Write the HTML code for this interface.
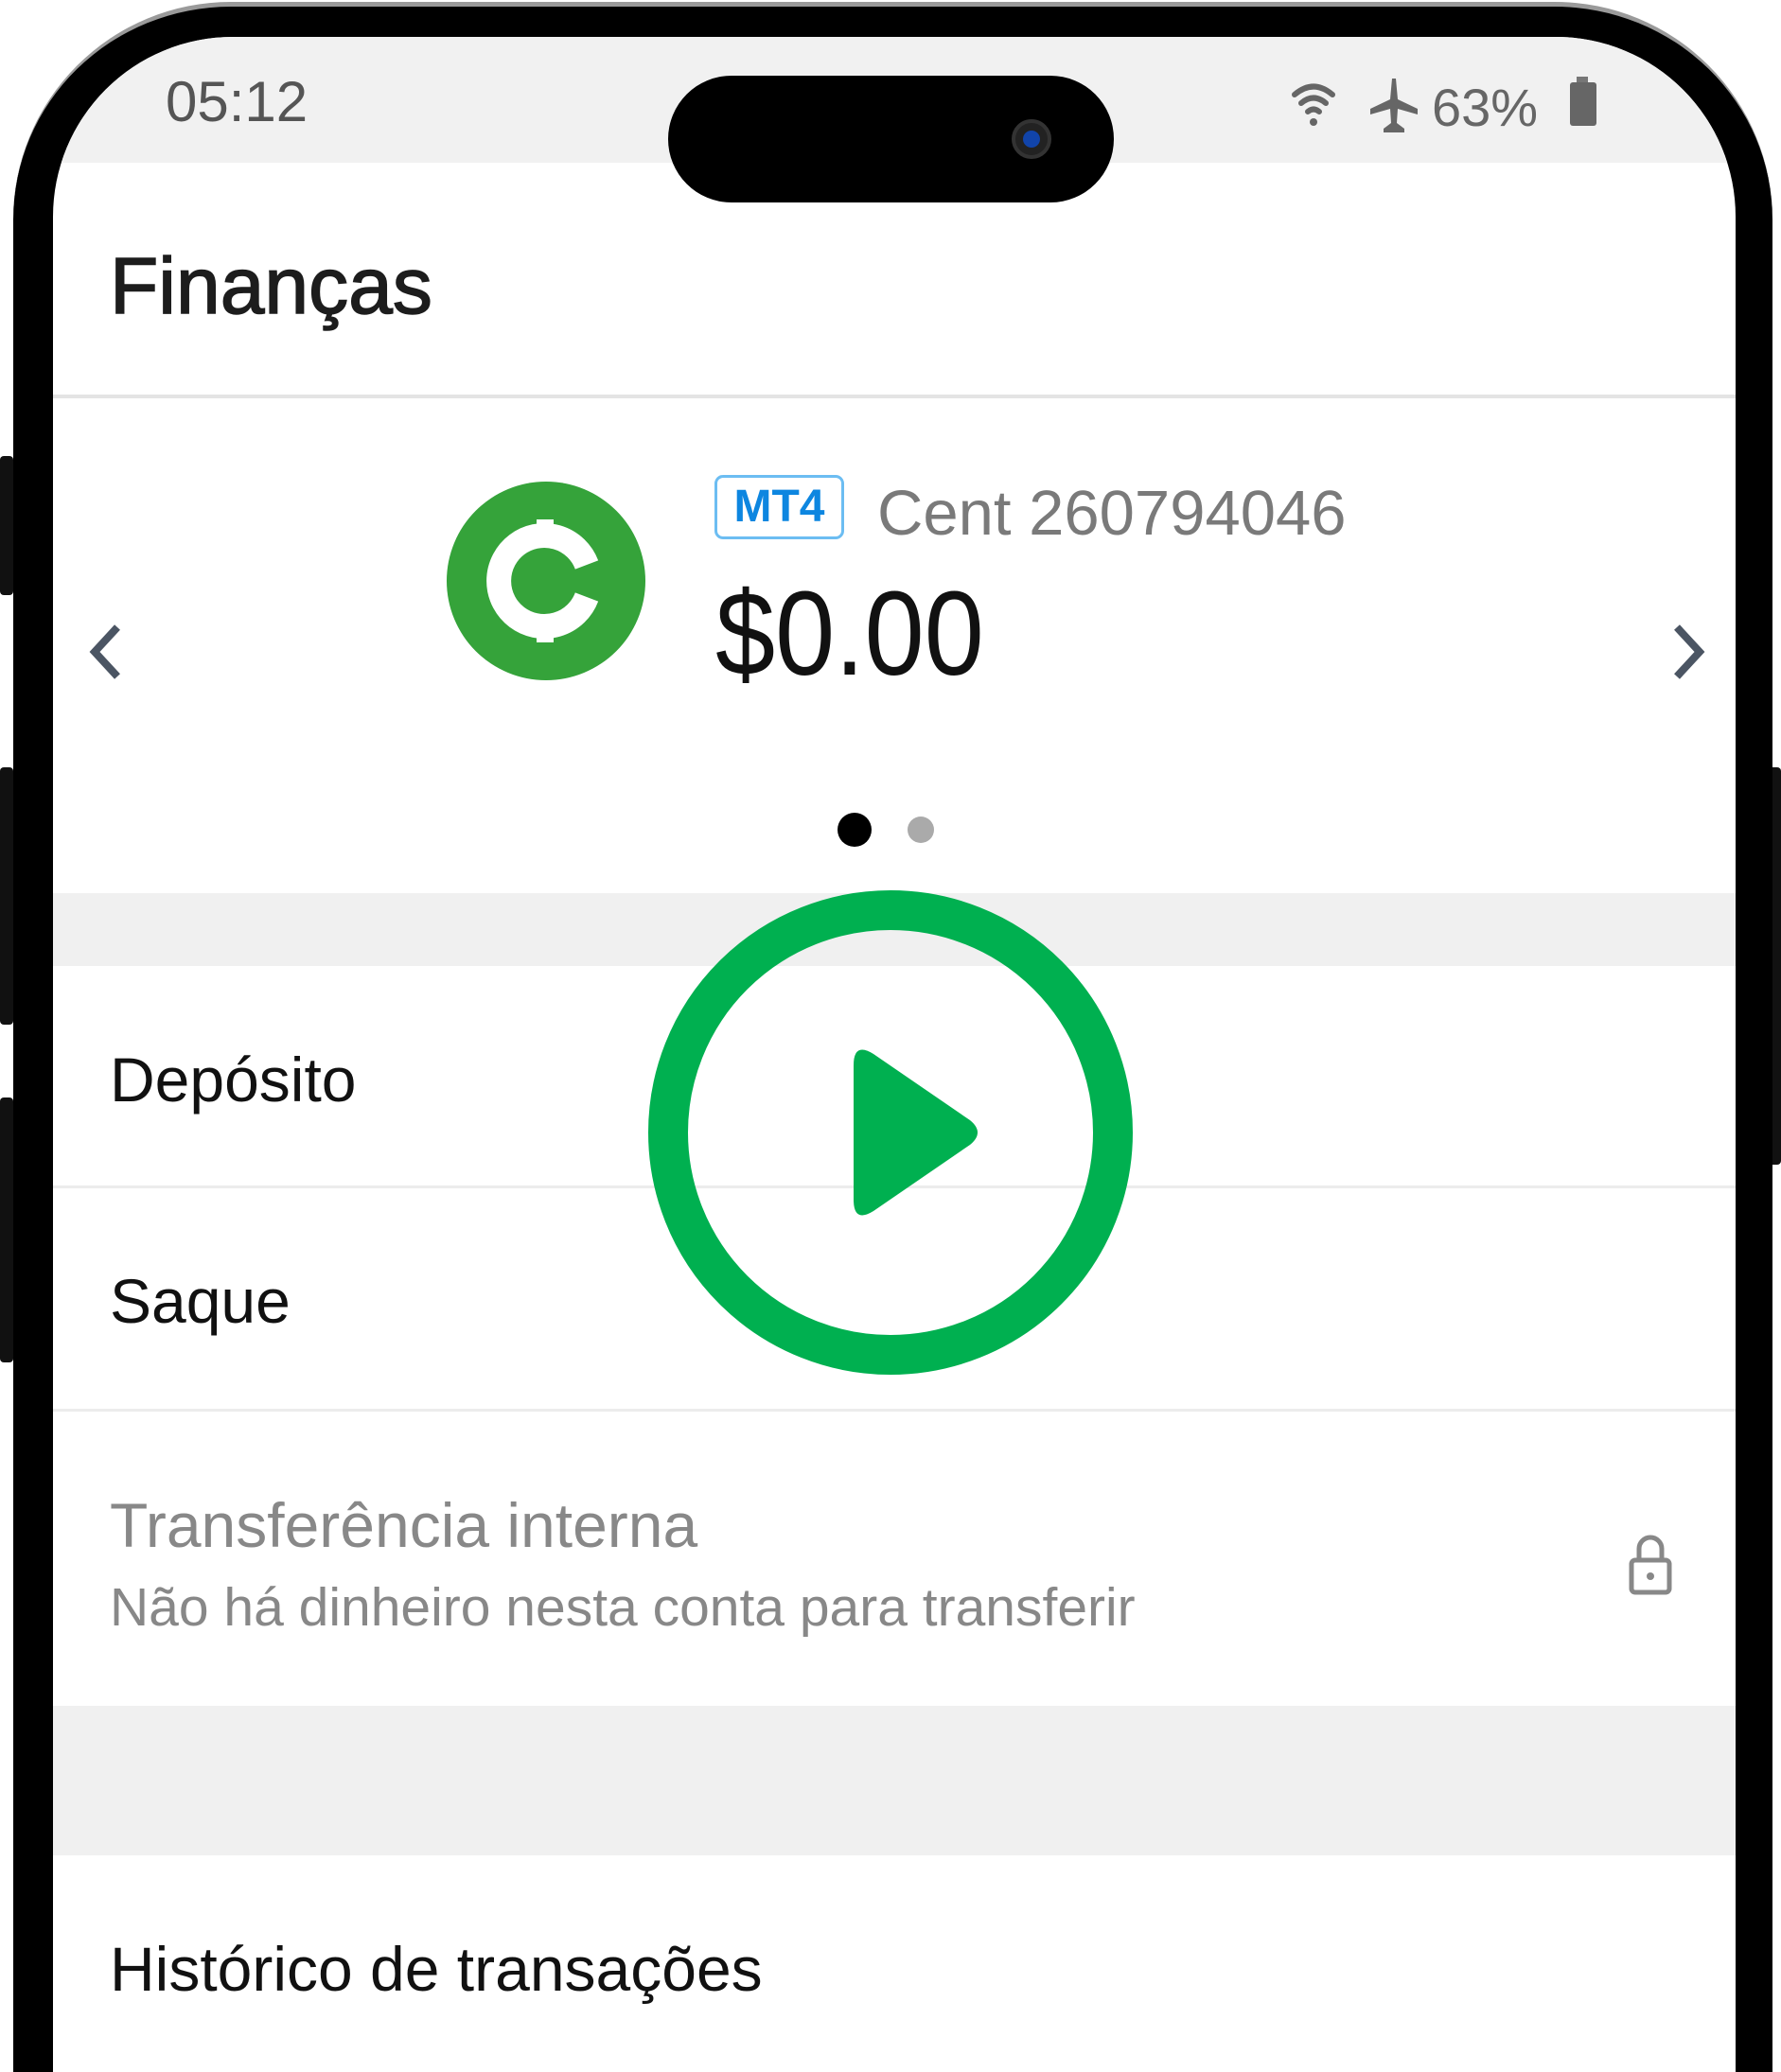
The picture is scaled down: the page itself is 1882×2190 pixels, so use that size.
<!DOCTYPE html>
<html style="width:1882px;height:2190px;overflow:hidden"><head><meta charset="utf-8"><style>
*{margin:0;padding:0;box-sizing:border-box}
body{width:1882px;height:2190px;background:#fff;position:relative;overflow:hidden;font-family:"Liberation Sans",sans-serif}
.clip{position:absolute;left:0;top:0;width:1882px;height:2190px;overflow:hidden}
.abs{position:absolute}
.frame{left:14px;top:2px;width:1859px;height:2188px;background:#000;border-radius:230px 230px 0 0;border-top:5px solid #9a9a9a}
.screen{left:56px;top:39px;width:1778px;height:2151px;background:#fff;border-radius:190px 190px 0 0;overflow:hidden}
.t{position:absolute;white-space:nowrap}
.sep{position:absolute;left:0;width:100%;height:3px;background:#ececec}
</style></head><body><div class="clip">
<div class="abs" style="left:0;top:482px;width:14px;height:147px;background:#111;border-radius:4px"></div>
<div class="abs" style="left:0;top:811px;width:14px;height:272px;background:#111;border-radius:4px"></div>
<div class="abs" style="left:0;top:1160px;width:14px;height:280px;background:#111;border-radius:4px"></div>
<div class="abs" style="left:1868px;top:811px;width:14px;height:420px;background:#111;border-radius:4px"></div>
<div class="abs frame"></div>
<div class="abs screen">
  <div class="abs" style="left:0;top:0;width:100%;height:133px;background:#f1f1f1"></div>
  <div class="t" style="left:119px;top:34px;font-size:60px;color:#555">05:12</div>
  <svg class="abs" style="left:1300px;top:36px" width="400" height="70" viewBox="0 0 400 70">
    <g fill="none" stroke="#666" stroke-width="6" stroke-linecap="round">
      <path d="M12 25 Q32 8 52 25"/><path d="M19 34 Q32 23 45 34"/><path d="M26 43 Q32 38 38 43"/>
    </g>
    <circle cx="32" cy="54" r="4" fill="#666"/>
    <path d="M115 8 L119 8 L121 30 L142 40 L142 46 L121 40 L120 55 L128 61 L128 65 L106 65 L106 61 L114 55 L113 40 L92 46 L92 40 L113 30 Z" fill="#666"/>
    <text x="157" y="58" font-family="Liberation Sans" font-size="56" fill="#666">63%</text>
    <rect x="310" y="6" width="12" height="8" fill="#777"/>
    <rect x="303" y="12" width="28" height="46" rx="3" fill="#666"/>
  </svg>
  <div class="abs" style="left:650px;top:41px;width:471px;height:134px;background:#000;border-radius:67px"></div>
  <div class="abs" style="left:1013px;top:87px;width:42px;height:42px;border-radius:50%;background:#222;border:4px solid #333"></div>
  <div class="abs" style="left:1025px;top:99px;width:18px;height:18px;border-radius:50%;background:#1144aa"></div>
  <div class="t" style="left:60px;top:215px;font-size:84px;color:#1d1d1d;-webkit-text-stroke:1.5px #1d1d1d">Finanças</div>
  <div class="sep" style="top:378px;height:4px;background:#e4e4e4"></div>
  <svg class="abs" style="left:416px;top:470px" width="210" height="210" viewBox="0 0 210 210">
    <circle cx="105" cy="105" r="105" fill="#35a33a"/>
    <path d="M148 88 A48 48 0 1 0 148 122" fill="none" stroke="#fff" stroke-width="26"/>
    <rect x="95" y="40" width="18" height="24" fill="#fff"/><rect x="95" y="146" width="18" height="24" fill="#fff"/>
  </svg>
  <div class="abs" style="left:699px;top:463px;width:137px;height:68px;border:3px solid #6cbdf2;border-radius:9px;color:#0d86e0;font-weight:bold;font-size:48px;text-align:center;line-height:62px">MT4</div>
  <div class="t" style="left:871px;top:465px;font-size:67px;color:#7a7a7a">Cent 260794046</div>
  <div class="t" style="left:700px;top:558px;font-size:126px;color:#111;transform:scaleX(0.9);transform-origin:0 0">$0.00</div>
  <svg class="abs" style="left:30px;top:610px" width="60" height="80"><path d="M38 14 L14 40 L38 66" fill="none" stroke="#4b5563" stroke-width="8"/></svg>
  <svg class="abs" style="left:1700px;top:610px" width="60" height="80"><path d="M16 14 L40 40 L16 66" fill="none" stroke="#4b5563" stroke-width="8"/></svg>
  <div class="abs" style="left:829px;top:820px;width:36px;height:36px;border-radius:50%;background:#000"></div>
  <div class="abs" style="left:903px;top:824px;width:28px;height:28px;border-radius:50%;background:#aaa"></div>
  <div class="abs" style="left:0;top:905px;width:100%;height:77px;background:#f0f0f0"></div>
  <div class="t" style="left:60px;top:1064px;font-size:66px;color:#111">Depósito</div>
  <div class="sep" style="top:1214px"></div>
  <div class="t" style="left:60px;top:1298px;font-size:66px;color:#111">Saque</div>
  <div class="sep" style="top:1450px"></div>
  <div class="t" style="left:60px;top:1535px;font-size:66px;color:#888">Transferência interna</div>
  <div class="t" style="left:60px;top:1627px;font-size:57px;color:#888">Não há dinheiro nesta conta para transferir</div>
  <svg class="abs" style="left:1660px;top:1580px" width="56" height="70" viewBox="0 0 56 70">
    <path d="M16 30 V18 A12 12 0 0 1 40 18 V30" fill="none" stroke="#888" stroke-width="5"/>
    <rect x="8" y="30" width="40" height="34" rx="4" fill="none" stroke="#888" stroke-width="5"/>
    <circle cx="28" cy="47" r="4" fill="#888"/>
  </svg>
  <div class="abs" style="left:0;top:1764px;width:100%;height:158px;background:#f0f0f0"></div>
  <div class="t" style="left:60px;top:2004px;font-size:66px;color:#111">Histórico de transações</div>
</div>
<svg class="abs" style="left:685px;top:941px" width="512" height="512" viewBox="0 0 512 512">
  <circle cx="256" cy="256" r="235" fill="none" stroke="#00b050" stroke-width="42"/>
  <path d="M217 185 Q217 160 238 173 L340 243 Q356 256 340 269 L238 339 Q217 352 217 327 Z" fill="#00b050"/>
</svg>
</div></body></html>
